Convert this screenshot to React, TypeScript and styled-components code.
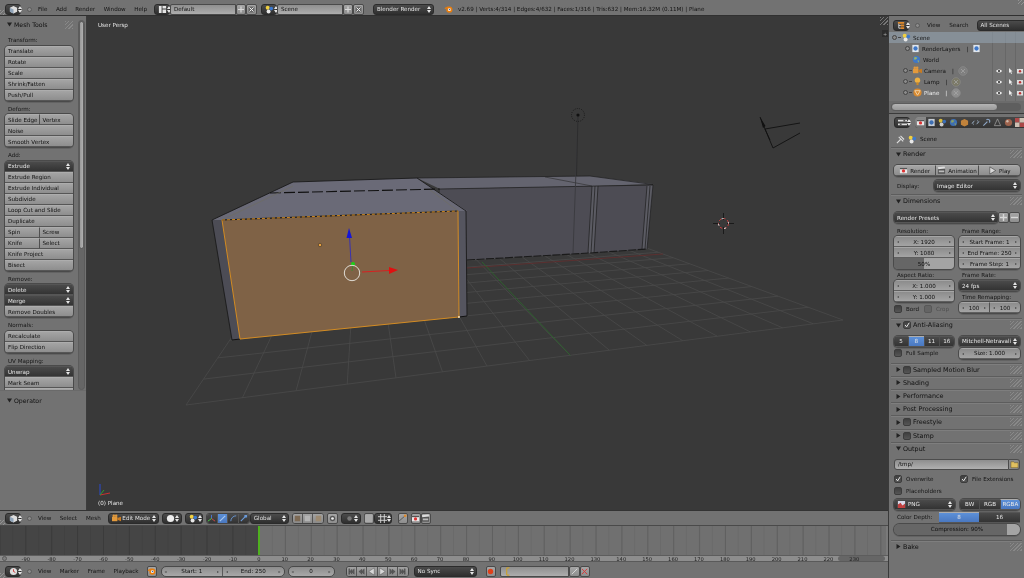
import React from 'react'
import styled, { createGlobalStyle, css } from 'styled-components'

const Global = createGlobalStyle`
  html, body { margin: 0; padding: 0; width: 1024px; height: 578px; overflow: hidden; background: #727272; }
  * { box-sizing: border-box; }
`

const Screen = styled.div`
  width: 1024px;
  height: 578px;
  display: flex;
  flex-direction: column;
  overflow: hidden;
  font-family: "DejaVu Sans", sans-serif;
  font-size: 5.6px;
  color: #111;
  background: #727272;
  filter: blur(0.35px);
`

const hatchFill = css`
  background: repeating-linear-gradient(135deg, #929292 0 1px, transparent 1px 2.5px);
`
const Bar = styled.div<{ $h: number; $top?: number }>`
  height: ${p => p.$h}px;
  flex: none;
  position: relative;
  display: flex;
  align-items: center;
  padding-top: ${p => p.$top ?? 0}px;
  background: #727272;
  white-space: nowrap;
  &::before {
    content: '';
    position: absolute;
    left: 0;
    bottom: 0;
    width: 5px;
    height: 5px;
    ${hatchFill}
  }
`
const TopBar = styled(Bar)`
  border-bottom: 1px solid #303030;
  &::after {
    content: '';
    position: absolute;
    right: 0;
    top: 0;
    width: 6px;
    height: 5px;
    ${hatchFill}
  }
`
const Main = styled.div`
  flex: 1;
  min-height: 0;
  display: flex;
`
const LeftArea = styled.div`
  width: 888px;
  display: flex;
  flex-direction: column;
`
const RightArea = styled.div`
  width: 136px;
  display: flex;
  flex-direction: column;
  border-left: 1px solid #3a3a3a;
  overflow: hidden;
`
const Workspace = styled.div`
  height: 494px;
  flex: none;
  display: flex;
`

/* header widgets */
const Slot = styled.div<{ $w: number; $ml?: number }>`
  width: ${p => p.$w}px;
  margin-left: ${p => p.$ml ?? 0}px;
  height: 11px;
  flex: none;
  display: flex;
  align-items: center;
`
const MenuItem = styled.span<{ $ml: number }>`
  margin-left: ${p => p.$ml}px;
  flex: none;
  color: #141414;
`
const DarkBox = styled(Slot)`
  background: linear-gradient(#4b4b4b, #2f2f2f);
  border-radius: 3px;
  border: 1px solid #2b2b2b;
  color: #e2e2e2;
  padding: 0 2px 0 3px;
  justify-content: space-between;
`
const LightBox = styled(Slot)`
  background: linear-gradient(#a6a6a6, #8e8e8e);
  border-radius: 2px;
  border: 1px solid #4a4a4a;
  padding: 0 1px;
  justify-content: center;
`
const FieldBox = styled(Slot)`
  background: linear-gradient(#8f8f8f, #adadad);
  border: 1px solid #4a4a4a;
  padding: 0 3px;
  border-radius: 2px 0 0 2px;
`
const Dot = styled.span<{ $ml: number }>`
  width: 5px;
  height: 5px;
  margin-left: ${p => p.$ml}px;
  flex: none;
  border-radius: 50%;
  background: #8a8a8a;
  border: 1px solid #5a5a5a;
`
const StatsText = styled.span`
  margin-left: 5px;
  color: #141414;
`
const ButtonRun = styled(Slot)`
  border: 1px solid #444;
  border-radius: 3px;
  overflow: hidden;
  background: #8c8c8c;
`
const RunCell = styled.div<{ $on?: boolean; $dark?: boolean }>`
  flex: 1;
  height: 100%;
  display: flex;
  align-items: center;
  justify-content: center;
  background: ${p => (p.$on ? 'linear-gradient(#5b8fd6,#4a78c0)' : p.$dark ? 'linear-gradient(#4b4b4b,#333)' : 'linear-gradient(#a2a2a2,#8a8a8a)')};
  & + & { border-left: 1px solid #555; }
`
const NumberBox = styled(Slot)`
  background: linear-gradient(#8c8c8c, #a8a8a8);
  border: 1px solid #4a4a4a;
  border-radius: 5px;
  overflow: hidden;
`
const NumberPart = styled.div`
  flex: 1;
  height: 100%;
  display: flex;
  align-items: center;
  justify-content: space-between;
  padding: 0 3px;
  & + & { border-left: 1px solid #5a5a5a; }
`
const Chev = styled.span`
  color: #4c4c4c;
  font-size: 4px;
`

/* tool shelf */
const ToolShelf = styled.div`
  width: 87px;
  flex: none;
  display: flex;
  flex-direction: column;
  background: #727272;
  border-right: 1px solid #3c3c3c;
`
const ToolBody = styled.div`
  height: 375px;
  flex: none;
  display: flex;
  overflow: hidden;
  border-bottom: 1px solid #6a6a6a;
`
const ToolList = styled.div`
  width: 78px;
  flex: none;
  padding: 3px 5px 0;
  display: flex;
  flex-direction: column;
  gap: 2.5px;
`
const ToolTrack = styled.div`
  width: 7px;
  height: 370px;
  margin-top: 4px;
  border-radius: 4px;
  background: #666;
  border: 1px solid #5c5c5c;
  overflow: hidden;
`
const ToolThumb = styled.div`
  height: 228px;
  border-radius: 4px;
  background: linear-gradient(90deg, #9a9a9a, #b0b0b0);
  border: 1px solid #5c5c5c;
`
const PanelTitle = styled.div`
  height: 11px;
  flex: none;
  margin-bottom: 2px;
  display: flex;
  align-items: center;
  gap: 2px;
  padding-left: 2px;
  font-size: 6.2px;
  color: #111;
`
const ShelfLabel = styled.div`
  height: 11px;
  flex: none;
  display: flex;
  align-items: center;
  padding-left: 3px;
  color: #161616;
`
const Group = styled.div`
  display: flex;
  flex-direction: column;
  flex: none;
  border-radius: 4px;
  box-shadow: 0 0 0 1px #4a4a4a, 0 1px 0 1px #636363;
  overflow: hidden;
`
const ShelfGroup = styled(Group)`
  margin-top: -2.5px;
`
const Row = styled.div`
  display: flex;
  & > * { flex: 1 1 0; min-width: 0; }
  & > * + * { border-left: 1px solid #4f4f4f; }
`
const Btn = styled.div<{ $tone?: 'light' | 'dark' | 'blue'; $center?: boolean }>`
  height: 11px;
  display: flex;
  align-items: center;
  justify-content: ${p => (p.$center ? 'center' : 'space-between')};
  padding: 0 3px;
  gap: 2px;
  border-top: 1px solid ${p => (p.$tone === 'dark' ? '#555' : '#adadad')};
  border-bottom: 1px solid #565656;
  white-space: nowrap;
  overflow: hidden;
  color: ${p => (p.$tone === 'light' || !p.$tone ? '#111' : '#e8e8e8')};
  background: ${p =>
    p.$tone === 'dark'
      ? 'linear-gradient(#4a4a4a,#333333)'
      : p.$tone === 'blue'
        ? 'linear-gradient(#5c90d8,#4a78c0)'
        : 'linear-gradient(#a4a4a4,#8e8e8e)'};
`
const OperatorHead = styled(PanelTitle)`
  height: 12px;
  padding-left: 7px;
  margin-top: 3px;
`

/* viewport */
const Viewport = styled.div`
  flex: 1;
  position: relative;
  background: #393939;
  overflow: hidden;
`
const Scene = styled.svg`
  display: block;
  width: 100%;
  height: 100%;
`
const Overlay = styled.span<{ $bottom?: boolean }>`
  position: absolute;
  left: 11px;
  ${p => (p.$bottom ? 'bottom: 4px;' : 'top: 6px;')}
  color: #e6e6e6;
`
const CornerPlus = styled.span`
  position: absolute;
  right: 0;
  top: 14px;
  width: 6px;
  height: 7px;
  background: #2c2c2c;
  color: #aaa;
  font-size: 5px;
  display: flex;
  align-items: center;
  justify-content: center;
`
const Hatch = styled.span<{ $w?: number }>`
  width: ${p => p.$w ?? 8}px;
  height: 8px;
  flex: none;
  margin-left: auto;
  ${hatchFill}
  opacity: 0.7;
`
const ViewportHatch = styled(Hatch)`
  position: absolute;
  top: 1px;
  right: 0;
`
const ViewHeader = styled(Bar)`
  border-top: 1px solid #333;
`

/* timeline */
const Timeline = styled.div`
  height: 30px;
  flex: none;
  display: flex;
  border-top: 1px solid #4a4a4a;
`
const TimelineCold = styled.div`
  width: 258px;
  flex: none;
  background-color: #454545;
  background-image:
    linear-gradient(90deg, #3b3b3b 1px, transparent 1px),
    linear-gradient(90deg, #414141 1px, transparent 1px);
  background-size: 25.9px 100%, 12.95px 100%;
  background-position: -0.6px 0, -0.6px 0;
`
const PlayLine = styled.div`
  width: 2px;
  flex: none;
  background: #4fb01f;
`
const TimelineHot = styled.div`
  flex: 1;
  background-color: #707070;
  background-image:
    linear-gradient(90deg, #606060 1px, transparent 1px),
    linear-gradient(90deg, #6a6a6a 1px, transparent 1px);
  background-size: 25.9px 100%, 12.95px 100%;
  background-position: 24.9px 0, 11.9px 0;
  border-right: 2px solid #7a7a7a;
`
const Ruler = styled.div`
  height: 7px;
  flex: none;
  position: relative;
  display: flex;
  align-items: center;
  padding-left: 12.85px;
  background: #8d8d8d;
  border-top: 1px solid #5d5d5d;
  border-bottom: 1px solid #5a5a5a;
  overflow: hidden;
  font-size: 5.2px;
  color: #222;
`
const RulerCell = styled.span`
  width: 25.9px;
  flex: none;
  position: relative;
  text-align: center;
`
const RulerHandle = styled.span`
  position: absolute;
  left: 2px;
  top: 0;
  width: 5px;
  height: 5px;
  border-radius: 50%;
  background: #7d7d7d;
  border: 1px solid #5a5a5a;
`
const RulerEnd = styled.span`
  position: absolute;
  right: 3px;
  top: 0;
  width: 47px;
  height: 5px;
  border-radius: 3px;
  background: #5f5f5f;
  opacity: 0.85;
`

/* right side */
const OutlinerHead = styled.div`
  height: 16px;
  flex: none;
  display: flex;
  align-items: center;
  padding-top: 2px;
  background: #727272;
`
const OutlinerBody = styled.div`
  height: 69px;
  flex: none;
  background: #737373;
  background-image:
    linear-gradient(90deg, transparent 103px, #676767 103px, #676767 104px, transparent 104px, transparent 116px, #676767 116px, #676767 117px, transparent 117px, transparent 126px, #676767 126px, #676767 127px, transparent 127px);
`
const OutRow = styled.div<{ $on?: boolean; $indent: number; $white?: boolean }>`
  height: 11px;
  display: flex;
  align-items: center;
  gap: 1px;
  padding-left: ${p => p.$indent}px;
  background: ${p => (p.$on ? 'rgba(150,165,180,.55)' : 'transparent')};
  color: ${p => (p.$white ? '#f0f0f0' : '#141414')};
`
const Expand = styled.span`
  width: 5px;
  height: 5px;
  flex: none;
  border-radius: 50%;
  border: 1px solid #444;
  background: #8a8a8a;
`
const Connector = styled.span<{ $w: number }>`
  width: ${p => p.$w}px;
  height: 1px;
  flex: none;
  background: #444;
`
const OutName = styled.span`
  flex: none;
  margin-left: 1px;
  margin-right: 5px;
`
const OutPipe = styled.span`
  flex: none;
  margin-right: 3px;
`
const Restrict = styled.div`
  margin-left: auto;
  width: 32px;
  flex: none;
  display: grid;
  grid-template-columns: 13px 10px 9px;
  justify-items: center;
  align-items: center;
`
const OutScroll = styled.div`
  height: 13px;
  flex: none;
  display: flex;
  align-items: center;
  padding: 0 3px 0 2px;
  background: #6b6b6b;
  border-bottom: 1px solid #3a3a3a;
`
const OutTrack = styled.div`
  width: 100%;
  height: 8px;
  border-radius: 4px;
  background: #5e5e5e;
  overflow: hidden;
`
const OutThumb = styled.div`
  width: 107px;
  height: 100%;
  border-radius: 4px;
  background: linear-gradient(#b4b4b4, #989898);
  border: 1px solid #5c5c5c;
`
const PropsHead = styled.div`
  height: 17px;
  flex: none;
  display: flex;
  align-items: center;
  padding-left: 5px;
`
const TabStrip = styled.div`
  margin-left: 5px;
  height: 11px;
  flex: 1;
  display: flex;
  background: linear-gradient(#474747, #333);
  border-radius: 3px 0 0 3px;
  overflow: hidden;
`
const Tab = styled.div<{ $on?: boolean }>`
  width: 11px;
  flex: none;
  display: flex;
  align-items: center;
  justify-content: center;
  opacity: ${p => (p.$on ? 1 : 0.85)};
  background: ${p => (p.$on ? 'linear-gradient(#8a8a8a,#6e6e6e)' : 'transparent')};
`
const ContextRow = styled.div`
  height: 16px;
  flex: none;
  display: flex;
  align-items: center;
  gap: 3px;
  padding-left: 7px;
`
const PanelHead = styled.div`
  height: 13.2px;
  flex: none;
  margin: 0 2px;
  padding: 0 0 0 5px;
  display: flex;
  align-items: center;
  gap: 2px;
  font-size: 6.4px;
  border-top: 1px solid #5d5d5d;
  box-shadow: inset 0 1px 0 #7e7e7e;
  color: #111;
`
const PanelBody = styled.div<{ $pt?: number; $pb?: number }>`
  flex: none;
  padding: ${p => p.$pt ?? 4}px 4px ${p => p.$pb ?? 4}px 5px;
  display: flex;
  flex-direction: column;
`
const TwoCols = styled.div<{ $mt?: number }>`
  display: grid;
  grid-template-columns: 60px 61px;
  column-gap: 5px;
  margin-top: ${p => p.$mt ?? 0}px;
`
const Col = styled.div`
  display: flex;
  flex-direction: column;
`
const Caption = styled.div`
  height: 11px;
  flex: none;
  display: flex;
  align-items: center;
  padding-left: 3px;
  white-space: nowrap;
  color: #161616;
`
const InlineRow = styled.div<{ $cols: string; $gap?: number; $mt?: number }>`
  display: grid;
  grid-template-columns: ${p => p.$cols};
  column-gap: ${p => p.$gap ?? 0}px;
  margin-top: ${p => p.$mt ?? 0}px;
  height: 11px;
  flex: none;
  align-items: center;
  white-space: nowrap;
`
const Num = styled.div`
  height: 11px;
  display: flex;
  align-items: center;
  justify-content: space-between;
  padding: 0 3px;
  white-space: nowrap;
  overflow: hidden;
  border-top: 1px solid #a6a6a6;
  border-bottom: 1px solid #5f5f5f;
  background: linear-gradient(#8c8c8c, #a4a4a4);
  color: #111;
`
const SliderCell = styled.div<{ $pct: number }>`
  height: 11px;
  display: flex;
  align-items: center;
  justify-content: center;
  background: linear-gradient(90deg, #666 ${p => p.$pct}%, #a4a4a4 ${p => p.$pct}%);
  color: #111;
`
const Check = styled.label<{ $faint?: boolean; $mt?: number }>`
  display: flex;
  align-items: center;
  gap: 4px;
  height: 11px;
  flex: none;
  margin-top: ${p => p.$mt ?? 0}px;
  white-space: nowrap;
  color: ${p => (p.$faint ? '#4f4f4f' : '#161616')};
`
const CheckBox = styled.span<{ $faint?: boolean }>`
  width: 8px;
  height: 8px;
  flex: none;
  border-radius: 2px;
  display: inline-flex;
  align-items: center;
  justify-content: center;
  border: 1px solid ${p => (p.$faint ? '#585858' : '#3c3c3c')};
  background: ${p => (p.$faint ? '#646464' : 'linear-gradient(#3f3f3f,#555)')};
`
const PathField = styled.div`
  height: 11px;
  flex: 1;
  display: flex;
  align-items: center;
  padding-left: 3px;
  border: 1px solid #4c4c4c;
  border-radius: 3px 0 0 3px;
  background: linear-gradient(#8e8e8e, #b0b0b0);
`
const FolderBtn = styled.div`
  width: 11px;
  height: 11px;
  flex: none;
  display: flex;
  align-items: center;
  justify-content: center;
  background: #8c8c8c;
  border: 1px solid #4c4c4c;
  border-left: none;
  border-radius: 0 3px 3px 0;
`
const FlexRow = styled.div`
  display: flex;
  flex: none;
`
const GroupBelow = styled(Group)`
  margin-top: 1px;
`
const CompressionBar = styled(Group)`
  margin-top: 1px;
  border-radius: 6px;
`
const PngName = styled.span`
  margin-right: auto;
`
const IconSvg = styled.svg`
  flex: none;
  display: block;
`

/* icon drawings */
const Ico = ({ children, s = 9 }: { children: React.ReactNode; s?: number }) => (
  <IconSvg width={s} height={s} viewBox="0 0 10 10">{children}</IconSvg>
)
const UpDown = () => (
  <IconSvg width="4" height="7" viewBox="0 0 4 7">
    <path d="M0 3 2 0 4 3zM0 4 2 7 4 4z" fill="#e6e6e6" />
  </IconSvg>
)
const Tri = ({ open }: { open?: boolean }) => (
  <IconSvg width="5" height="5" viewBox="0 0 5 5">
    <path d={open ? 'M0 .5H5L2.5 4.5z' : 'M.5 0V5L4.5 2.500z'} fill="#222" />
  </IconSvg>
)
const Tick = () => (
  <svg width="8" height="8" viewBox="0 0 8 8"><path d="M1.5 4 3.500 6.500 7 1" fill="none" stroke="#e6e6e6" strokeWidth="1.300" /></svg>
)
const CubeIcon = () => (
  <Ico><path d="M5 1 9 3V7.500L5 9.500 1 7.500V3z" fill="#ddd" /><path d="M5 5V9.500L1 7.500V3z" fill="#8fa3b8" /></Ico>
)
const ClockIcon = () => (
  <Ico><circle cx="5" cy="5" r="4" fill="#ddd" /><path d="M5 2.500V5L7 6" stroke="#c33" fill="none" /></Ico>
)
const OutlinerIcon = () => (
  <Ico><path d="M1 1H8V3H1zM4 4H8V6H4zM4 7H8V9H4z" fill="#e08a2c" /><path d="M2 3V8H4M2 5H4" stroke="#ddd" fill="none" /></Ico>
)
const PropsIcon = () => (
  <Ico><path d="M0 2H10V4H0zM0 6H10V8H0z" fill="#ddd" /><path d="M6 2H8V4H6zM2 6H4V8H2z" fill="#555" /></Ico>
)
const LayoutIcon = () => (
  <Ico><path d="M1 1H4V9H1zM5 1H9V4H5zM5 5H9V9H5z" fill="#e4e4e4" /></Ico>
)
const SceneIcon = () => (
  <Ico><circle cx="3" cy="3" r="2.200" fill="#f0d040" /><circle cx="7" cy="4" r="2" fill="#3a78d0" /><circle cx="4" cy="7.200" r="2.200" fill="#e8e8e8" /></Ico>
)
const LogoIcon = () => (
  <Ico><path d="M1 4 5 2" stroke="#e87d0d" strokeWidth="1.400" /><circle cx="6" cy="5.200" r="3.400" fill="#e87d0d" /><circle cx="6" cy="5.200" r="1.600" fill="#fff" /><circle cx="6.200" cy="5" r=".9" fill="#3a6ab0" /></Ico>
)
const PlusBtnIcon = () => (
  <svg width="7" height="7" viewBox="0 0 7 7"><path d="M3.500 0V7M0 3.500H7" stroke="#d8d8d8" strokeWidth="1.400" /></svg>
)
const MinusBtnIcon = () => (
  <svg width="7" height="7" viewBox="0 0 7 7"><path d="M0 3.500H7" stroke="#d8d8d8" strokeWidth="1.400" /></svg>
)
const CrossIcon = () => (
  <svg width="7" height="7" viewBox="0 0 7 7"><path d="M.5 .5H6.500V6.500H.5z" fill="#666" /><path d="M1.500 1.500 5.500 5.500M5.500 1.500 1.500 5.500" stroke="#eee" /></svg>
)
const RenderIcon = () => (
  <Ico><path d="M1 2H9V8H1z" fill="#e8e8e8" /><path d="M1 2H9V3.500H1z" fill="#555" /><circle cx="5" cy="5.500" r="1.800" fill="#d33" /></Ico>
)
const AnimIcon = () => (
  <Ico><path d="M1 3H9V8.500H1z" fill="#555" /><path d="M1 1.500 8.500 .5 9 2.500 1.500 3.500z" fill="#ddd" /><path d="M2 5H8V7H2z" fill="#bbb" /></Ico>
)
const PlayIcon = () => (
  <Ico><path d="M2 1 8.500 5 2 9z" fill="#d8d8d8" stroke="#333" strokeWidth=".6" /></Ico>
)
const PinIcon = () => (
  <Ico><path d="M1 9 5 5M3 2 8 7M5 1 9 5" stroke="#ddd" strokeWidth="1.200" fill="none" /></Ico>
)
const EyeIcon = () => (
  <svg width="6" height="6" viewBox="0 0 6 6"><path d="M0 3C1.500 1 4.500 1 6 3 4.500 5 1.500 5 0 3z" fill="#eee" /><circle cx="3" cy="3" r="1" fill="#222" /></svg>
)
const ArrowIcon = () => (
  <svg width="5" height="6" viewBox="0 0 5 6"><path d="M1 0V5L2.200 4 3.200 6 4 5.500 3 3.600 4.600 3.400z" fill="#eee" /></svg>
)
const CamSmall = () => (
  <svg width="6" height="6" viewBox="0 0 6 6"><path d="M0 1H6V5.500H0z" fill="#ddd" /><circle cx="3" cy="3.200" r="1.200" fill="#b33" /></svg>
)
const WorldIcon = () => (
  <Ico><circle cx="5" cy="5" r="4" fill="#3f78c8" /><path d="M3 2 6 3 4.500 5 2 5zM6 6 8 6 7 8.500z" fill="#9ab36a" /></Ico>
)
const LayersIcon = () => (
  <Ico><path d="M1.500 1H8.500V9H1.500z" fill="#dfe6ee" /><circle cx="5" cy="5" r="2.400" fill="#3f78c8" /></Ico>
)
const CameraIcon = () => (
  <Ico><path d="M0 3H6V8H0z" fill="#e39a3c" /><path d="M6 4.500 10 3V8L6 6.500z" fill="#c97c22" /><circle cx="2" cy="2" r="1.400" fill="#e39a3c" /><circle cx="4.600" cy="2" r="1.400" fill="#e39a3c" /></Ico>
)
const LampIcon = () => (
  <Ico><circle cx="5" cy="3.500" r="3" fill="#eeb040" /><path d="M3.800 6H6.200V9H3.800z" fill="#c9882a" /></Ico>
)
const MeshIcon = () => (
  <Ico><circle cx="5" cy="5" r="4.500" fill="#d98a30" /><path d="M2 3H8L5 8z" fill="none" stroke="#f3d8b0" /></Ico>
)
const GhostIcon = ({ tone }: { tone: string }) => (
  <Ico s={10}><circle cx="5" cy="5" r="4.400" fill={tone} stroke="#8c8c8c" strokeWidth=".6" /><path d="M3 3 7 7M7 3 3 7" stroke="#a8a8a8" strokeWidth=".7" /></Ico>
)
const FolderIcon = () => (
  <Ico><path d="M1 2H4L5 3H9V8.500H1z" fill="#e0c060" stroke="#55461a" strokeWidth=".5" /></Ico>
)
const PngIcon = () => (
  <Ico><path d="M1 1H9V9H1z" fill="#d8d8e8" /><path d="M1 5 4 3 6 6 9 4V9H1z" fill="#c04040" /></Ico>
)

const transportPaths: { d: string; fill: string }[] = [
  { d: 'M2 2H3V8H2zM8 2V8L5.500 5.500V8L3 5 5.500 2.500V5z', fill: '#5a5a5a' },
  { d: 'M8 2V8L5.500 5.500V8L2 5 5.500 2.500V5z', fill: '#5a5a5a' },
  { d: 'M8 1V9L2 5z', fill: '#d8d8d8' },
  { d: 'M2 1V9L8 5z', fill: '#d8d8d8' },
  { d: 'M2 2V8L4.500 5.500V8L8 5 4.500 2.500V5z', fill: '#5a5a5a' },
  { d: 'M8 2H7V8H8zM2 2V8L4.500 5.500V8L7 5 4.500 2.500V5z', fill: '#5a5a5a' },
]

const TabIcons = [
  <RenderIcon key="0" />,
  <LayersIcon key="1" />,
  <SceneIcon key="2" />,
  <WorldIcon key="3" />,
  <Ico key="4"><path d="M5 1 9 3V7.500L5 9.500 1 7.500V3z" fill="#d9903c" /></Ico>,
  <Ico key="5"><path d="M1 6 4 3M6 7 9 4M3 7.500A2 2 0 0 1 3 4M7 2.500A2 2 0 0 1 7 6" stroke="#9cb0c6" fill="none" /></Ico>,
  <Ico key="6"><path d="M1.500 8.500 6 4M5 2A2 2 0 0 1 8 5" stroke="#9cb8dc" strokeWidth="1.300" fill="none" /></Ico>,
  <Ico key="7"><path d="M5 1 8.500 8.500H1.500z" fill="none" stroke="#b8b8b8" strokeWidth=".8" /></Ico>,
  <Ico key="8"><circle cx="5" cy="5" r="4" fill="#b06a50" /><circle cx="3.800" cy="3.600" r="1.300" fill="#e8d0c0" /></Ico>,
  <Ico key="9"><path d="M0 0H5V5H0zM5 5H10V10H5z" fill="#c04a4a" /><path d="M5 0H10V5H5zM0 5H5V10H0z" fill="#e8d8c8" /></Ico>,
]

/* 3d scene helpers */
type P = [number, number]
const cross = (a: P, b: P, c: P, d: P): P => {
  const d1: P = [b[0] - a[0], b[1] - a[1]]
  const d2: P = [d[0] - c[0], d[1] - c[1]]
  const t = ((c[0] - a[0]) * d2[1] - (c[1] - a[1]) * d2[0]) / (d1[0] * d2[1] - d1[1] * d2[0])
  return [a[0] + d1[0] * t, a[1] + d1[1] * t]
}
const nearL: P = [186, 405]
const nearR: P = [843, 320]
const midR: P = [663, 254]
const midL: P = [269, 282]
const centre: P = [482.5, 266]
const farL = cross(nearR, centre, nearL, midL)
const farR = cross(nearL, centre, nearR, midR)

// unit square to the floor quad
const homography = (a: P, b: P, c: P, d: P) => {
  const dx1 = b[0] - c[0], dx2 = d[0] - c[0], sx = a[0] - b[0] + c[0] - d[0]
  const dy1 = b[1] - c[1], dy2 = d[1] - c[1], sy = a[1] - b[1] + c[1] - d[1]
  const den = dx1 * dy2 - dx2 * dy1
  const g = (sx * dy2 - dx2 * sy) / den
  const h = (dx1 * sy - sx * dy1) / den
  return (u: number, v: number): P => {
    const w = g * u + h * v + 1
    return [
      ((b[0] - a[0] + g * b[0]) * u + (d[0] - a[0] + h * d[0]) * v + a[0]) / w,
      ((b[1] - a[1] + g * b[1]) * u + (d[1] - a[1] + h * d[1]) * v + a[1]) / w,
    ]
  }
}
const floor = homography(nearL, nearR, farR, farL)
const floorPath = Array.from({ length: 17 }, (_, i) => {
  const t = i / 16
  const a = floor(t, 0), b = floor(t, 1), c = floor(0, t), d = floor(1, t)
  return `M${a[0]} ${a[1]}L${b[0]} ${b[1]}M${c[0]} ${c[1]}L${d[0]} ${d[1]}`
}).join('')
const greenStart = floor(0.5, 0)

const SceneDrawing = () => (
  <Scene viewBox="87 16 801 494">
    <path d={floorPath} stroke="#4a4a4a" strokeWidth=".8" fill="none" />
    <path d="M467 268L663 254" stroke="#602f2f" strokeWidth=".9" fill="none" />
    <path d={`M${greenStart[0]} ${greenStart[1]}L482 262`} stroke="#2c642c" strokeWidth=".9" fill="none" />

    {/* long box */}
    <path d="M440 189 653 185 647 249 590 253 467 260 440 262z" fill="#4d4c54" />
    <path d="M417 178 590 176 653 184 592 186 440 189z" fill="#64646f" />
    <path d="M592 186 598 186 594 253 588 253z" fill="#5b5b63" />
    <path d="M647 186 653 185 647 249 642 249z" fill="#5b5b63" />
    <path d="M417 178 590 176 653 184.500M440 189 653 185M647 186 642 249M653 185 647 249M592 186 588 253M598 186 594 253M595 186 591 253M650 186 645 249" stroke="#1c1c1c" strokeWidth=".7" fill="none" />
    <path d="M467 260 590 253 647 249" stroke="#1a1a1a" strokeWidth="1.100" strokeDasharray="8 1.500" fill="none" />
    <path d="M545 177 592 186" stroke="#2a2a2a" strokeWidth=".6" fill="none" />

    {/* lamp */}
    <path d="M578 115 573 253" stroke="#3a3a3e" strokeWidth=".9" fill="none" />
    <path d="M578 115 576.500 176" stroke="#2a2a2a" strokeWidth=".8" fill="none" />
    <circle cx="578" cy="115" r="6.500" fill="none" stroke="#1c1c1c" strokeDasharray="1 1.200" />
    <circle cx="578" cy="115" r="1.600" fill="#111" />

    {/* near box */}
    <path d="M212 220 293 182 417 178 467 211 458 211 222 220z" fill="#6a6a77" />
    <path d="M212 220 222 220 240 339 232 340z" fill="#4c4c55" />
    <path d="M458 211 466 211 467 316 459 317z" fill="#55555f" />
    <path d="M222 220 458 211 459 317 240 339z" fill="#7f6246" />
    <path d="M212 220 293 182 417 178 466 211M212 220 232 340M466 211 467 316" stroke="#1a1a1a" strokeWidth=".9" fill="none" />
    <path d="M270 193 440 189" stroke="#111" strokeWidth="1.100" strokeDasharray="11 3" fill="none" />
    <path d="M232 340 240 339M459 317 467 316" stroke="#111" fill="none" />
    <path d="M222 220 293 186M458 211 430 190" stroke="#6f6d60" strokeWidth=".6" fill="none" />
    <path d="M222 220 240 339 459 317 458 211" fill="none" stroke="#e0921f" strokeWidth=".9" />
    <path d="M222 220 458 211" stroke="#1a1a1a" strokeWidth="1.100" fill="none" />
    <path d="M222 220 458 211" fill="none" stroke="#e0921f" strokeWidth=".9" strokeDasharray="3 2" />
    <circle cx="459" cy="317" r="1" fill="#ffe8c0" />

    {/* origin and manipulator */}
    <circle cx="320" cy="245" r="1.700" fill="#e8a040" stroke="#222" strokeWidth=".5" />
    <path d="M351 262 349.500 236" stroke="#3a32b0" strokeWidth="1" fill="none" />
    <path d="M349 228 346.500 238H352z" fill="#1515d8" />
    <path d="M362 272 389 270.500" stroke="#d82020" strokeWidth="1" fill="none" />
    <path d="M398 270 389 267V274z" fill="#e01010" />
    <path d="M353 264 352 271" stroke="#2e8f2e" strokeWidth=".8" fill="none" />
    <circle cx="353" cy="264" r="2" fill="#18d018" />
    <circle cx="352" cy="273" r="7.700" fill="none" stroke="#e0dcd4" strokeWidth="1" />

    {/* camera */}
    <path d="M760 117 765 129 800 123M765 129 773 148 800 133M765 129 770 140" stroke="#111" strokeWidth=".9" fill="none" />
    <path d="M760 117 763 128 765.500 126z" fill="#111" />

    {/* 3d cursor */}
    <path d="M723.500 213V220M723.500 227V234M713 223.500H720M727 223.500H734" stroke="#1a1a1a" fill="none" />
    <circle cx="723.500" cy="223.500" r="5" fill="none" stroke="#c83a3a" strokeWidth="1" strokeDasharray="2.500 2" />
    <circle cx="723.500" cy="223.500" r="5" fill="none" stroke="#e6e6e6" strokeWidth="1" strokeDasharray="2 6" strokeDashoffset="3" />

    {/* axis widget */}
    <path d="M100 495 100 484" stroke="#2a4ad0" fill="none" />
    <path d="M100 495 110 493" stroke="#c83030" fill="none" />
    <path d="M100 495 104 490" stroke="#30a030" fill="none" />
  </Scene>
)

/* small composed widgets */
const Stepper = ({ text }: { text: string }) => (
  <Num><Chev>◂</Chev><span>{text}</span><Chev>▸</Chev></Num>
)
const Label = ({ text }: { text: string }) => <Btn>{text}</Btn>
const Select = ({ text }: { text: string }) => <Btn $tone="dark">{text}<UpDown /></Btn>

const ShelfSections: { title: string; items: (string | string[] | { menu: string })[] }[] = [
  { title: 'Transform:', items: ['Translate', 'Rotate', 'Scale', 'Shrink/Fatten', 'Push/Pull'] },
  { title: 'Deform:', items: [['Slide Edge', 'Vertex'], 'Noise', 'Smooth Vertex'] },
  {
    title: 'Add:',
    items: [{ menu: 'Extrude' }, 'Extrude Region', 'Extrude Individual', 'Subdivide', 'Loop Cut and Slide', 'Duplicate', ['Spin', 'Screw'], ['Knife', 'Select'], 'Knife Project', 'Bisect'],
  },
  { title: 'Remove:', items: [{ menu: 'Delete' }, { menu: 'Merge' }, 'Remove Doubles'] },
  { title: 'Normals:', items: ['Recalculate', 'Flip Direction'] },
  { title: 'UV Mapping:', items: [{ menu: 'Unwrap' }, 'Mark Seam', 'Clear Seam'] },
]

const ToolPanel = () => (
  <ToolShelf>
    <ToolBody>
      <ToolList>
        <PanelTitle><Tri open /> Mesh Tools<Hatch /></PanelTitle>
        {ShelfSections.map(s => (
          <React.Fragment key={s.title}>
            <ShelfLabel>{s.title}</ShelfLabel>
            <ShelfGroup>
              {s.items.map((item, i) =>
                typeof item === 'string' ? (
                  <Label key={i} text={item} />
                ) : Array.isArray(item) ? (
                  <Row key={i}>{item.map(t => <Label key={t} text={t} />)}</Row>
                ) : (
                  <Select key={i} text={item.menu} />
                ),
              )}
            </ShelfGroup>
          </React.Fragment>
        ))}
      </ToolList>
      <ToolTrack><ToolThumb /></ToolTrack>
    </ToolBody>
    <OperatorHead><Tri open /> Operator</OperatorHead>
  </ToolShelf>
)

const rulerNumbers = Array.from({ length: 33 }, (_, i) => -90 + i * 10)

const App = () => (
  <Screen>
    <Global />
    <TopBar $h={16} $top={3}>
      <DarkBox $w={16} $ml={5}><CubeIcon /><UpDown /></DarkBox>
      <Dot $ml={6} />
      <MenuItem $ml={6}>File</MenuItem>
      <MenuItem $ml={8.5}>Add</MenuItem>
      <MenuItem $ml={8.5}>Render</MenuItem>
      <MenuItem $ml={8.5}>Window</MenuItem>
      <MenuItem $ml={8.5}>Help</MenuItem>
      <DarkBox $w={16} $ml={7}><LayoutIcon /><UpDown /></DarkBox>
      <FieldBox $w={66}>Default</FieldBox>
      <LightBox $w={10}><PlusBtnIcon /></LightBox>
      <LightBox $w={11}><CrossIcon /></LightBox>
      <DarkBox $w={16} $ml={4}><SceneIcon /><UpDown /></DarkBox>
      <FieldBox $w={66}>Scene</FieldBox>
      <LightBox $w={10}><PlusBtnIcon /></LightBox>
      <LightBox $w={11}><CrossIcon /></LightBox>
      <DarkBox $w={61} $ml={9}>Blender Render<UpDown /></DarkBox>
      <Slot $w={9} $ml={10}><LogoIcon /></Slot>
      <StatsText>v2.69 | Verts:4/314 | Edges:4/632 | Faces:1/316 | Tris:632 | Mem:16.32M (0.11M) | Plane</StatsText>
    </TopBar>
    <Main>
      <LeftArea>
        <Workspace>
          <ToolPanel />
          <Viewport>
            <SceneDrawing />
            <Overlay>User Persp</Overlay>
            <Overlay $bottom>(0) Plane</Overlay>
            <ViewportHatch />
            <CornerPlus>+</CornerPlus>
          </Viewport>
        </Workspace>
        <ViewHeader $h={15}>
          <DarkBox $w={16} $ml={5}><CubeIcon /><UpDown /></DarkBox>
          <Dot $ml={6} />
          <MenuItem $ml={6}>View</MenuItem>
          <MenuItem $ml={8.5}>Select</MenuItem>
          <MenuItem $ml={9}>Mesh</MenuItem>
          <DarkBox $w={51} $ml={7}><CameraIcon />Edit Mode<UpDown /></DarkBox>
          <DarkBox $w={20} $ml={3}><Ico><circle cx="5" cy="5" r="4" fill="#eee" /></Ico><UpDown /></DarkBox>
          <DarkBox $w={18} $ml={3}><SceneIcon /><UpDown /></DarkBox>
          <ButtonRun $w={44} $ml={3}>
            <RunCell $dark><Ico><path d="M5 5V1" stroke="#4a7ad8" /><path d="M5 5 9 8" stroke="#d84a4a" /><path d="M5 5 1 8" stroke="#4ad84a" /></Ico></RunCell>
            <RunCell $on><Ico><path d="M2 8 8 2" stroke="#a8c8f0" strokeWidth="1.300" /></Ico></RunCell>
            <RunCell $dark><Ico><path d="M2 8A6 6 0 0 1 8 2" stroke="#6a9ad8" fill="none" /></Ico></RunCell>
            <RunCell $dark><Ico><path d="M2 8 7 3" stroke="#6a9ad8" strokeWidth="1.300" /><path d="M6 1H9V4H6z" fill="#6a9ad8" /></Ico></RunCell>
          </ButtonRun>
          <DarkBox $w={39}>Global<UpDown /></DarkBox>
          <ButtonRun $w={32} $ml={3}>
            <RunCell><Ico><path d="M2 2H8V8H2z" fill="#7d6a55" /></Ico></RunCell>
            <RunCell><Ico><path d="M2 2H8V8H2z" fill="#b4b4b4" /></Ico></RunCell>
            <RunCell><Ico><path d="M2 2H8V8H2z" fill="#9c8a72" /></Ico></RunCell>
          </ButtonRun>
          <LightBox $w={11} $ml={3}><Ico><circle cx="5" cy="5" r="3" fill="#555" /><circle cx="5" cy="5" r="1.500" fill="#eee" /></Ico></LightBox>
          <DarkBox $w={20} $ml={3}><Ico><circle cx="5" cy="5" r="2.500" fill="#777" /></Ico><UpDown /></DarkBox>
          <LightBox $w={10} $ml={3}><Ico><path d="M1 1H9V9H1z" fill="#aaa" /></Ico></LightBox>
          <DarkBox $w={18}><Ico><path d="M0 3H10M0 7H10M3 0V10M7 0V10" stroke="#ddd" /></Ico><UpDown /></DarkBox>
          <LightBox $w={10} $ml={6}><Ico><path d="M1 8 8 2" stroke="#555" /><circle cx="8" cy="2" r="1.500" fill="#e08a2c" /></Ico></LightBox>
          <LightBox $w={10} $ml={3}><RenderIcon /></LightBox>
          <LightBox $w={10}><AnimIcon /></LightBox>
        </ViewHeader>
        <Timeline>
          <TimelineCold />
          <PlayLine />
          <TimelineHot />
        </Timeline>
        <Ruler>
          <RulerHandle />
          <RulerEnd />
          {rulerNumbers.map(n => <RulerCell key={n}>{n}</RulerCell>)}
        </Ruler>
        <Bar $h={16} $top={2}>
          <DarkBox $w={16} $ml={5}><ClockIcon /><UpDown /></DarkBox>
          <Dot $ml={6} />
          <MenuItem $ml={6}>View</MenuItem>
          <MenuItem $ml={8.5}>Marker</MenuItem>
          <MenuItem $ml={8.5}>Frame</MenuItem>
          <MenuItem $ml={8.5}>Playback</MenuItem>
          <LightBox $w={10} $ml={8}><LogoIcon /></LightBox>
          <NumberBox $w={124} $ml={4}>
            <NumberPart><Chev>◂</Chev>Start: 1<Chev>▸</Chev></NumberPart>
            <NumberPart><Chev>◂</Chev>End: 250<Chev>▸</Chev></NumberPart>
          </NumberBox>
          <NumberBox $w={47} $ml={3}>
            <NumberPart><Chev>◂</Chev>0<Chev>▸</Chev></NumberPart>
          </NumberBox>
          <ButtonRun $w={63} $ml={11}>
            {transportPaths.map(t => (
              <RunCell key={t.d}><Ico><path d={t.d} fill={t.fill} stroke="#3c3c3c" strokeWidth=".4" /></Ico></RunCell>
            ))}
          </ButtonRun>
          <DarkBox $w={63} $ml={5}>No Sync<UpDown /></DarkBox>
          <LightBox $w={10} $ml={9}><Ico><circle cx="5" cy="5" r="3" fill="#e0401a" /></Ico></LightBox>
          <FieldBox $w={69} $ml={4}><Ico><path d="M3 1 V9M3 1H6M3 9H6" stroke="#c9a030" strokeWidth="1.300" fill="none" /></Ico></FieldBox>
          <LightBox $w={11}><Ico><path d="M2 8 8 2" stroke="#ddd" /></Ico></LightBox>
          <LightBox $w={10}><Ico><path d="M2 2 8 8M8 2 2 8" stroke="#d33" /></Ico></LightBox>
        </Bar>
      </LeftArea>
      <RightArea>
        <OutlinerHead>
          <DarkBox $w={16} $ml={4}><OutlinerIcon /><UpDown /></DarkBox>
          <Dot $ml={6} />
          <MenuItem $ml={7}>View</MenuItem>
          <MenuItem $ml={9}>Search</MenuItem>
          <DarkBox $w={60} $ml={8}>All Scenes</DarkBox>
        </OutlinerHead>
        <OutlinerBody>
          <OutRow $on $indent={3}><Expand /><Connector $w={3} /><SceneIcon /><OutName>Scene</OutName></OutRow>
          <OutRow $indent={16}><Expand /><LayersIcon /><OutName>RenderLayers</OutName><OutPipe>|</OutPipe><LayersIcon /></OutRow>
          <OutRow $indent={23}><WorldIcon /><OutName>World</OutName></OutRow>
          <OutRow $indent={14}>
            <Expand /><Connector $w={3} /><CameraIcon /><OutName>Camera</OutName><OutPipe>|</OutPipe><GhostIcon tone="#7f7f7f" />
            <Restrict><EyeIcon /><ArrowIcon /><CamSmall /></Restrict>
          </OutRow>
          <OutRow $indent={14}>
            <Expand /><Connector $w={3} /><LampIcon /><OutName>Lamp</OutName><OutPipe>|</OutPipe><GhostIcon tone="#7c7a68" />
            <Restrict><EyeIcon /><ArrowIcon /><CamSmall /></Restrict>
          </OutRow>
          <OutRow $indent={14} $white>
            <Expand /><Connector $w={3} /><MeshIcon /><OutName>Plane</OutName><OutPipe>|</OutPipe><GhostIcon tone="#8e8e8e" />
            <Restrict><EyeIcon /><ArrowIcon /><CamSmall /></Restrict>
          </OutRow>
        </OutlinerBody>
        <OutScroll><OutTrack><OutThumb /></OutTrack></OutScroll>
        <PropsHead>
          <DarkBox $w={16}><PropsIcon /><UpDown /></DarkBox>
          <TabStrip>
            {TabIcons.map((icon, i) => <Tab key={i} $on={i === 0}>{icon}</Tab>)}
          </TabStrip>
        </PropsHead>
        <ContextRow><PinIcon /><SceneIcon />Scene</ContextRow>

        <PanelHead><Tri open /> Render<Hatch $w={12} /></PanelHead>
        <PanelBody $pt={5} $pb={3}>
          <Group>
            <Row>
              <Btn $center><RenderIcon />Render</Btn>
              <Btn $center><AnimIcon />Animation</Btn>
              <Btn $center><PlayIcon />Play</Btn>
            </Row>
          </Group>
          <InlineRow $cols="40px 1fr" $mt={4}>
            <Caption>Display:</Caption>
            <Group><Select text="Image Editor" /></Group>
          </InlineRow>
        </PanelBody>

        <PanelHead><Tri open /> Dimensions<Hatch $w={12} /></PanelHead>
        <PanelBody $pt={5} $pb={4}>
          <InlineRow $cols="1fr 11px 11px">
            <Group><Select text="Render Presets" /></Group>
            <LightBox $w={11}><PlusBtnIcon /></LightBox>
            <LightBox $w={11}><MinusBtnIcon /></LightBox>
          </InlineRow>
          <TwoCols $mt={2}>
            <Col>
              <Caption>Resolution:</Caption>
              <Group>
                <Stepper text="X: 1920" />
                <Stepper text="Y: 1080" />
                <SliderCell $pct={50}>50%</SliderCell>
              </Group>
              <Caption>Aspect Ratio:</Caption>
              <Group>
                <Stepper text="X: 1.000" />
                <Stepper text="Y: 1.000" />
              </Group>
              <InlineRow $cols="30px 1fr" $mt={1}>
                <Check><CheckBox />Bord</Check>
                <Check $faint><CheckBox $faint />Crop</Check>
              </InlineRow>
            </Col>
            <Col>
              <Caption>Frame Range:</Caption>
              <Group>
                <Stepper text="Start Frame: 1" />
                <Stepper text="End Frame: 250" />
                <Stepper text="Frame Step: 1" />
              </Group>
              <Caption>Frame Rate:</Caption>
              <Group><Select text="24 fps" /></Group>
              <Caption>Time Remapping:</Caption>
              <Group>
                <Row>
                  <Stepper text="100" />
                  <Stepper text="100" />
                </Row>
              </Group>
            </Col>
          </TwoCols>
        </PanelBody>

        <PanelHead><Tri open /> <CheckBox><Tick /></CheckBox> Anti-Aliasing<Hatch $w={12} /></PanelHead>
        <PanelBody $pt={4} $pb={4}>
          <TwoCols>
            <Col>
              <Group>
                <Row>
                  <Btn $tone="dark" $center>5</Btn>
                  <Btn $tone="blue" $center>8</Btn>
                  <Btn $tone="dark" $center>11</Btn>
                  <Btn $tone="dark" $center>16</Btn>
                </Row>
              </Group>
              <Check $mt={1}><CheckBox />Full Sample</Check>
            </Col>
            <Col>
              <Group><Select text="Mitchell-Netravali" /></Group>
              <GroupBelow><Stepper text="Size: 1.000" /></GroupBelow>
            </Col>
          </TwoCols>
        </PanelBody>

        <PanelHead><Tri /> <CheckBox /> Sampled Motion Blur<Hatch $w={12} /></PanelHead>
        <PanelHead><Tri /> Shading<Hatch $w={12} /></PanelHead>
        <PanelHead><Tri /> Performance<Hatch $w={12} /></PanelHead>
        <PanelHead><Tri /> Post Processing<Hatch $w={12} /></PanelHead>
        <PanelHead><Tri /> <CheckBox /> Freestyle<Hatch $w={12} /></PanelHead>
        <PanelHead><Tri /> <CheckBox /> Stamp<Hatch $w={12} /></PanelHead>
        <PanelHead><Tri open /> Output<Hatch $w={12} /></PanelHead>
        <PanelBody $pt={4} $pb={5}>
          <FlexRow>
            <PathField>/tmp/</PathField>
            <FolderBtn><FolderIcon /></FolderBtn>
          </FlexRow>
          <InlineRow $cols="66px 1fr" $mt={4}>
            <Check><CheckBox><Tick /></CheckBox>Overwrite</Check>
            <Check><CheckBox><Tick /></CheckBox>File Extensions</Check>
          </InlineRow>
          <InlineRow $cols="1fr" $mt={1}>
            <Check><CheckBox />Placeholders</Check>
          </InlineRow>
          <InlineRow $cols="61px 1fr" $gap={5} $mt={2}>
            <Group><Btn $tone="dark"><PngIcon /><PngName>PNG</PngName><UpDown /></Btn></Group>
            <Group>
              <Row>
                <Btn $tone="dark" $center>BW</Btn>
                <Btn $tone="dark" $center>RGB</Btn>
                <Btn $tone="blue" $center>RGBA</Btn>
              </Row>
            </Group>
          </InlineRow>
          <InlineRow $cols="45px 40px 1fr" $mt={2}>
            <Caption>Color Depth:</Caption>
            <Btn $tone="blue" $center>8</Btn>
            <Btn $tone="dark" $center>16</Btn>
          </InlineRow>
          <CompressionBar>
            <SliderCell $pct={90}>Compression: 90%</SliderCell>
          </CompressionBar>
        </PanelBody>
        <PanelHead><Tri /> Bake<Hatch $w={12} /></PanelHead>
      </RightArea>
    </Main>
  </Screen>
)

export default App
